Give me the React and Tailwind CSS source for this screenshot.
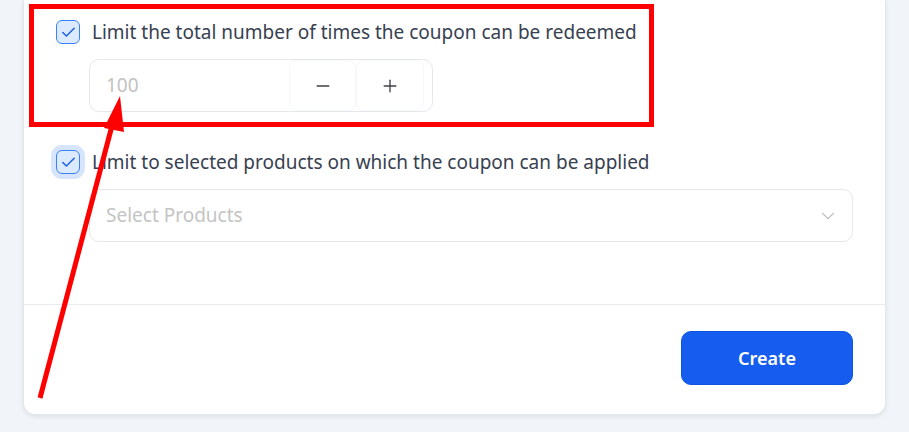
import { Check, Minus, Plus, ChevronDown } from "lucide-react";

function Checkbox({ focused }) {
  return (
    <span
      className={`flex h-6 w-6 shrink-0 items-center justify-center rounded-md border-[1.5px] border-[#3b82f6] bg-[#dbeafe] text-[#2563eb] ${
        focused ? "ring-[5px] ring-[#d6e4fd]" : ""
      }`}
    >
      <Check size={17} strokeWidth={2.25} />
    </span>
  );
}

export default function App() {
  return (
    <div
      className="relative min-h-screen bg-[#f1f5f9] px-[23px] pb-[18px]"
      style={{ fontFamily: '"Noto Sans", "Open Sans", sans-serif' }}
    >
      <div className="rounded-b-xl border-x border-b border-[#e3e7ec] bg-white shadow-[0_2px_4px_rgba(15,23,42,0.08)]">
        <div className="px-8 pt-5 pb-[62px]">
          <label className="flex items-center gap-3">
            <Checkbox />
            <span className="text-[19px] leading-6 text-[#374151]">
              Limit the total number of times the coupon can be redeemed
            </span>
          </label>
          <div className="mt-[15px] ml-[33px] flex h-[53px] w-[344px] items-center rounded-[10px] border border-[#e5e7eb] pr-2">
            <span className="flex-1 pl-4 text-[19px] text-[#c2c2c2]">100</span>
            <button className="flex h-full w-[67px] items-center justify-center rounded-lg border border-[#f6f7f8] text-[#3f3f46]">
              <Minus size={20} strokeWidth={1.6} />
            </button>
            <button className="flex h-full w-[68px] items-center justify-center rounded-lg border border-[#f6f7f8] text-[#3f3f46]">
              <Plus size={20} strokeWidth={1.6} />
            </button>
          </div>

          <label className="mt-[38px] flex items-center gap-3">
            <Checkbox focused />
            <span className="text-[19px] leading-6 text-[#374151]">
              Limit to selected products on which the coupon can be applied
            </span>
          </label>
          <div className="mt-[15px] ml-[33px] flex h-[53px] items-center justify-between rounded-[10px] border border-[#e5e7eb] pl-4 pr-[13px]">
            <span className="text-[19px] text-[#c4c4c4]">Select Products</span>
            <ChevronDown size={22} strokeWidth={1.2} className="text-[#c0c0c0]" />
          </div>
        </div>

        <div className="flex justify-end border-t border-[#e8eaed] px-8 pt-[26px] pb-[29px]">
          <button className="h-[54px] w-[172px] rounded-[10px] border border-[#0f55e0] bg-[#165def] text-[18px] font-semibold text-white">
            Create
          </button>
        </div>
      </div>

      {/* annotation overlay */}
      <div className="pointer-events-none absolute left-[29px] top-[4px] h-[123px] w-[625px] border-[5px] border-[#ff0000]" />
      <svg className="pointer-events-none absolute left-0 top-0" width="909" height="432">
        <line x1="40" y1="398" x2="113" y2="122" stroke="#ff0000" strokeWidth="5" />
        <polygon points="120,96 104,128 124,132" fill="#ff0000" />
      </svg>
    </div>
  );
}
